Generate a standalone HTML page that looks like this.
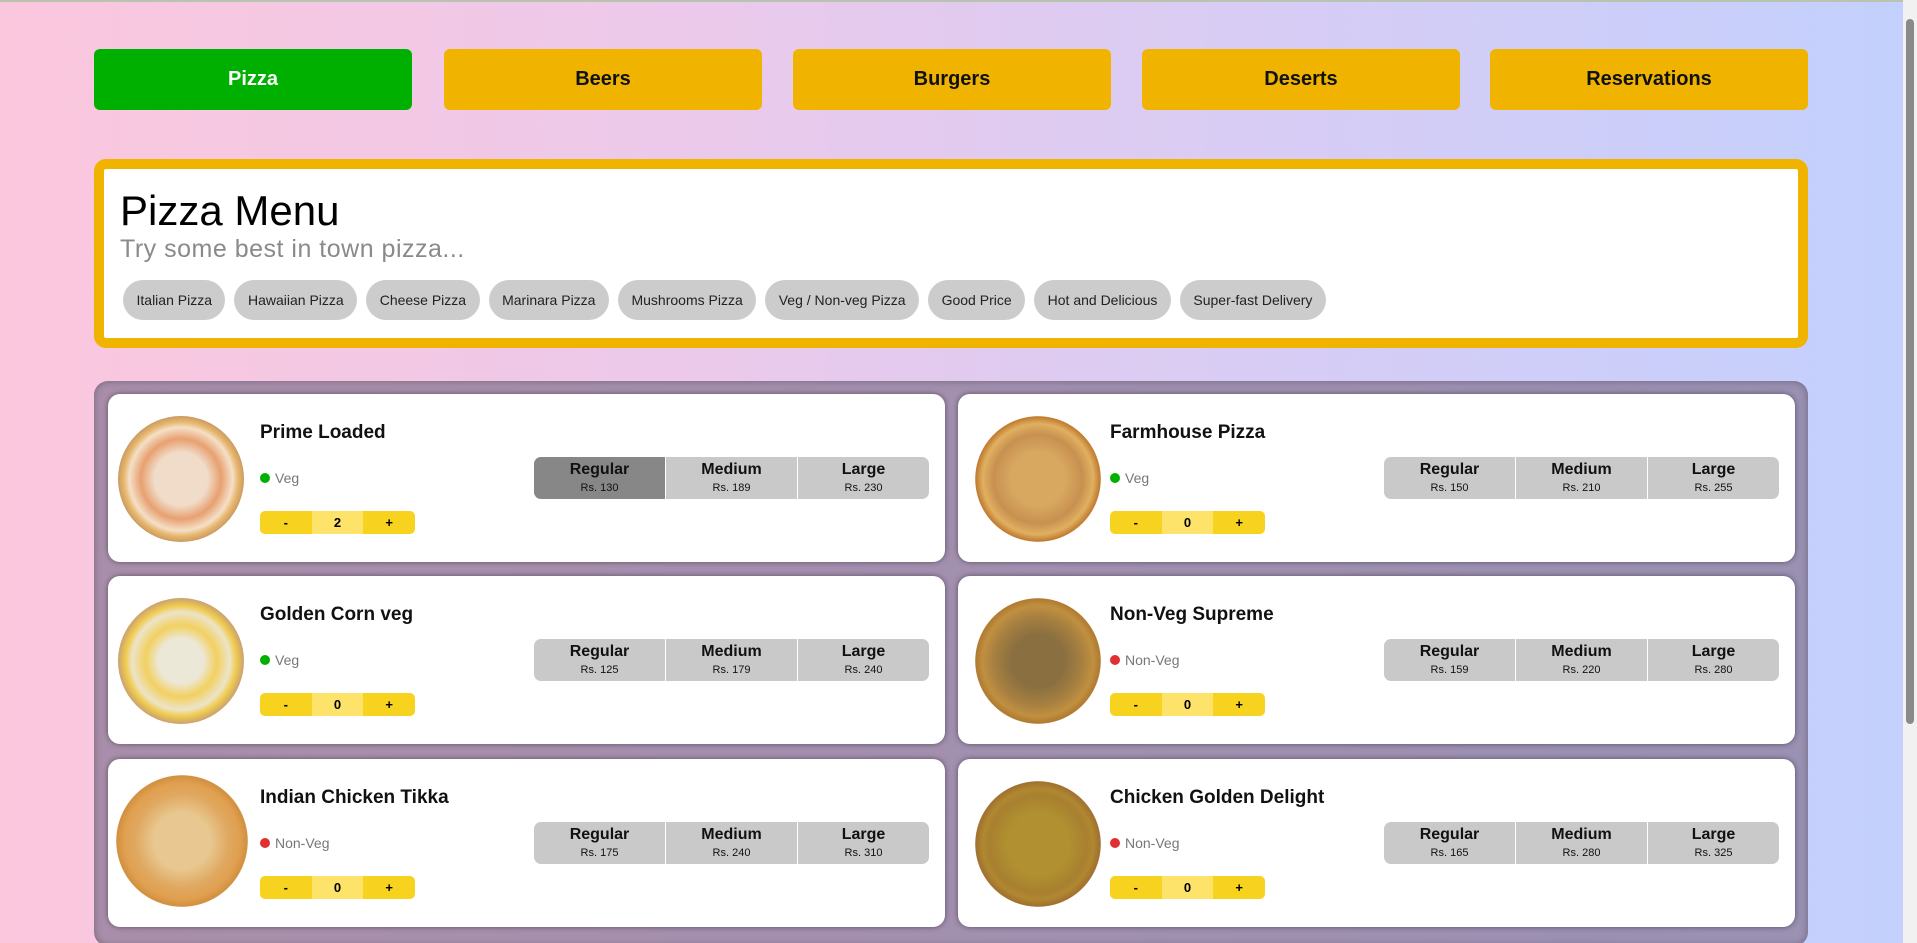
<!DOCTYPE html>
<html><head><meta charset="utf-8">
<style>
*{box-sizing:border-box;margin:0;padding:0}
html,body{width:1917px;height:943px;overflow:hidden}
body{font-family:"Liberation Sans",sans-serif;background:linear-gradient(90deg,#fbc7dd 0%,#ecc9ea 35%,#d8ccf4 65%,#c3d0fd 100%);position:relative}
.topline{position:absolute;left:0;top:0;width:1917px;height:2px;background:#b8c4b0}
.sb{position:absolute;right:0;top:0;width:14px;height:943px;background:#f1f1f1}
.sb .th{position:absolute;left:3px;top:19px;width:8px;height:705px;background:#8a8a8a;border-radius:4px}
.nav{position:absolute;top:49px;height:61px;width:318px;border-radius:6px;background:#f0b400;font-weight:bold;font-size:20px;display:flex;align-items:center;justify-content:center;color:#111}
.nav.on{background:#00b000;color:#fff}
.menu{position:absolute;left:94px;top:159px;width:1714px;height:189px;border:10px solid #f0b400;border-radius:12px;background:#fff}
.menu h1{position:absolute;left:16px;top:18px;font-size:42px;font-weight:normal;color:#000}
.menu h2{position:absolute;left:16px;top:66px;font-size:25px;letter-spacing:.5px;font-weight:normal;color:#8a8a8a}
.chips{position:absolute;left:19px;top:111px;display:flex;gap:9px}
.chip{height:40px;border-radius:20px;background:#ccc;font-size:14px;display:flex;align-items:center;padding:0 13.5px;color:#222}
.grid{position:absolute;left:94px;top:381px;width:1714px;height:565px;background:rgba(135,118,148,.7);border-radius:14px;box-shadow:inset 0 0 8px rgba(0,0,0,.3)}
.card{position:absolute;width:837px;height:168px;background:#fff;border-radius:12px;box-shadow:0 0 6px rgba(0,0,0,.45)}
.pz{position:absolute;left:10px;top:22px;width:126px;height:126px;border-radius:50%}
.nm{position:absolute;left:152px;top:28px;font-size:19px;font-weight:bold;color:#111}
.tp{position:absolute;left:152px;top:76px;font-size:14px;color:#777;display:flex;align-items:center;gap:5px}
.tp b{width:10px;height:10px;border-radius:50%;display:inline-block}
.ct{position:absolute;left:152px;top:117px;width:155px;height:23px;border-radius:5px;overflow:hidden;display:flex;font-size:13px;font-weight:bold}
.ct span{flex:1;display:flex;align-items:center;justify-content:center;background:#f7d21e}
.ct span:nth-child(2){background:#fde36a}
.pr{position:absolute;left:426px;top:63px;width:395px;height:42px;border-radius:7px;overflow:hidden;display:flex;gap:1px;background:#fff}
.pr div{flex:1;background:#c9c9c9;text-align:center;padding-top:4px}
.pr div.sel{background:#878787}
.pr b{display:block;font-size:16px;color:#111}
.pr small{display:block;font-size:11px;color:#111;margin-top:3px}
</style></head><body>
<div class="topline"></div>
<div class="nav on" style="left:94px">Pizza</div>
<div class="nav" style="left:444px">Beers</div>
<div class="nav" style="left:793px">Burgers</div>
<div class="nav" style="left:1142px">Deserts</div>
<div class="nav" style="left:1490px">Reservations</div>
<div class="menu">
<h1>Pizza Menu</h1>
<h2>Try some best in town pizza...</h2>
<div class="chips"><div class="chip">Italian Pizza</div><div class="chip">Hawaiian Pizza</div><div class="chip">Cheese Pizza</div><div class="chip">Marinara Pizza</div><div class="chip">Mushrooms Pizza</div><div class="chip">Veg / Non-veg Pizza</div><div class="chip">Good Price</div><div class="chip">Hot and Delicious</div><div class="chip">Super-fast Delivery</div></div>
</div>
<div class="grid"></div>

<div class="card" style="left:108px;top:394px"><div class="pz" style="background:radial-gradient(circle,#f0dcc8 0 30%,#e8a070 45%,#f4e0c8 58%,#e8b870 64%,#c99a60 71%,#b08860 73%,rgba(0,0,0,0) 74%)"></div><div class="nm">Prime Loaded</div><div class="tp"><b style="background:#00b000"></b>Veg</div><div class="ct"><span>-</span><span>2</span><span>+</span></div><div class="pr"><div class="sel"><b>Regular</b><small>Rs. 130</small></div><div><b>Medium</b><small>Rs. 189</small></div><div><b>Large</b><small>Rs. 230</small></div></div></div>
<div class="card" style="left:958px;top:394px"><div class="pz" style="left:17px;background:radial-gradient(circle,#d8a860 0 30%,#c89050 50%,#e0b060 62%,#c07a30 70%,rgba(0,0,0,0) 71%)"></div><div class="nm">Farmhouse Pizza</div><div class="tp"><b style="background:#00b000"></b>Veg</div><div class="ct"><span>-</span><span>0</span><span>+</span></div><div class="pr"><div><b>Regular</b><small>Rs. 150</small></div><div><b>Medium</b><small>Rs. 210</small></div><div><b>Large</b><small>Rs. 255</small></div></div></div>

<div class="card" style="left:108px;top:576px"><div class="pz" style="background:radial-gradient(circle,#ece8d8 0 25%,#f2d060 40%,#ece4c8 55%,#f0cc50 62%,#c9a070 71%,rgba(0,0,0,0) 73%)"></div><div class="nm">Golden Corn veg</div><div class="tp"><b style="background:#00b000"></b>Veg</div><div class="ct"><span>-</span><span>0</span><span>+</span></div><div class="pr"><div><b>Regular</b><small>Rs. 125</small></div><div><b>Medium</b><small>Rs. 179</small></div><div><b>Large</b><small>Rs. 240</small></div></div></div>
<div class="card" style="left:958px;top:576px"><div class="pz" style="left:17px;background:radial-gradient(circle,#8a7040 0 30%,#a88040 50%,#c09040 62%,#b07a30 70%,rgba(0,0,0,0) 71%)"></div><div class="nm">Non-Veg Supreme</div><div class="tp"><b style="background:#e03030"></b>Non-Veg</div><div class="ct"><span>-</span><span>0</span><span>+</span></div><div class="pr"><div><b>Regular</b><small>Rs. 159</small></div><div><b>Medium</b><small>Rs. 220</small></div><div><b>Large</b><small>Rs. 280</small></div></div></div>

<div class="card" style="left:108px;top:759px"><div class="pz" style="top:16px;width:132px;height:132px;left:8px;background:radial-gradient(circle,#e8c890 0 30%,#e0a860 50%,#e0a050 62%,#d09040 70%,rgba(0,0,0,0) 71%)"></div><div class="nm">Indian Chicken Tikka</div><div class="tp"><b style="background:#e03030"></b>Non-Veg</div><div class="ct"><span>-</span><span>0</span><span>+</span></div><div class="pr"><div><b>Regular</b><small>Rs. 175</small></div><div><b>Medium</b><small>Rs. 240</small></div><div><b>Large</b><small>Rs. 310</small></div></div></div>
<div class="card" style="left:958px;top:759px"><div class="pz" style="left:17px;background:radial-gradient(circle,#b09030 0 35%,#a88030 55%,#b08830 62%,#a07030 70%,rgba(0,0,0,0) 71%)"></div><div class="nm">Chicken Golden Delight</div><div class="tp"><b style="background:#e03030"></b>Non-Veg</div><div class="ct"><span>-</span><span>0</span><span>+</span></div><div class="pr"><div><b>Regular</b><small>Rs. 165</small></div><div><b>Medium</b><small>Rs. 280</small></div><div><b>Large</b><small>Rs. 325</small></div></div></div>

<div class="sb"><div class="th"></div></div>
</body></html>
